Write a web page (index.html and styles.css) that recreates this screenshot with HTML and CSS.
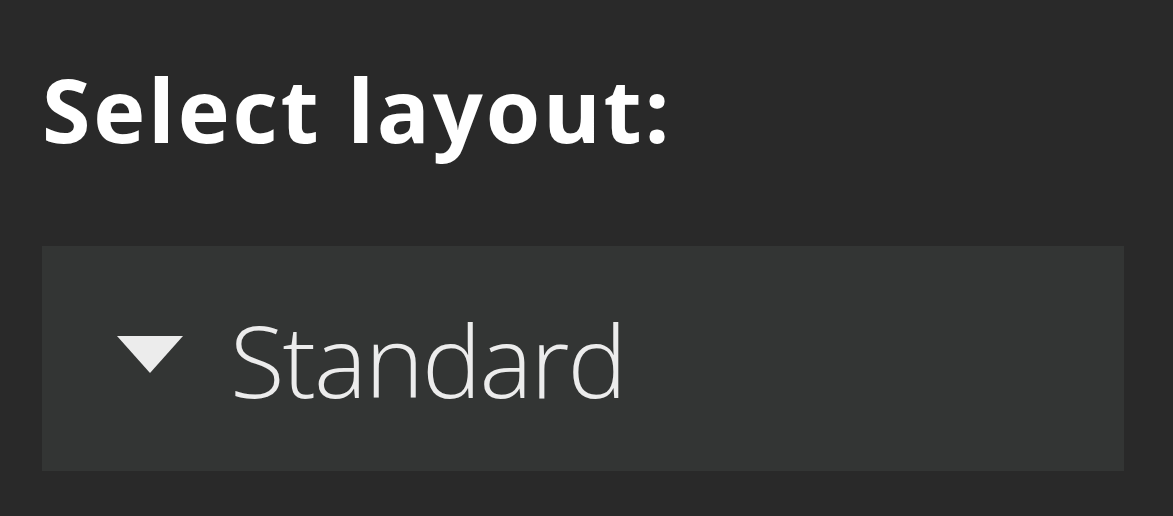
FILE: index.html
```html
<!DOCTYPE html>
<html lang="en">

<head>
    <meta charset="UTF-8">
    <meta name="viewport" content="width=device-width, initial-scale=1.0">
    <title>Select layout</title>
    <link rel="stylesheet" href="styles.css">
</head>

<body>
    <div class="panel">
        <h1 class="title">Select layout:</h1>
        <div class="dropdown">
            <svg class="caret" width="66" height="37" viewBox="0 0 66 37">
                <polygon points="0,0 66,0 33,37" fill="#ececec" />
            </svg>
            <span class="dropdown-value">Standard</span>
        </div>
    </div>
</body>

</html>
```

FILE: styles.css
```css
* {
    margin: 0;
    padding: 0;
    box-sizing: border-box;
}

body {
    font-family: "Open Sans", "Noto Sans", sans-serif;
    background: #292929;
    color: #ffffff;
    min-height: 100vh;
    overflow: hidden;
}

.panel {
    display: flex;
    flex-direction: column;
    padding: 65px 49px 0 42px;
}

.title {
    font-size: 88px;
    font-weight: 700;
    line-height: 88px;
    letter-spacing: 2.8px;
    margin-bottom: 93px;
}

.dropdown {
    display: flex;
    align-items: center;
    height: 225px;
    background: #333534;
    padding-left: 75px;
}

.caret {
    flex-shrink: 0;
    margin-top: -8px;
}

.dropdown-value {
    margin-left: 47px;
    font-size: 100px;
    font-weight: 350;
    line-height: 100px;
    color: #ececec;
    letter-spacing: -2px;
}
```
